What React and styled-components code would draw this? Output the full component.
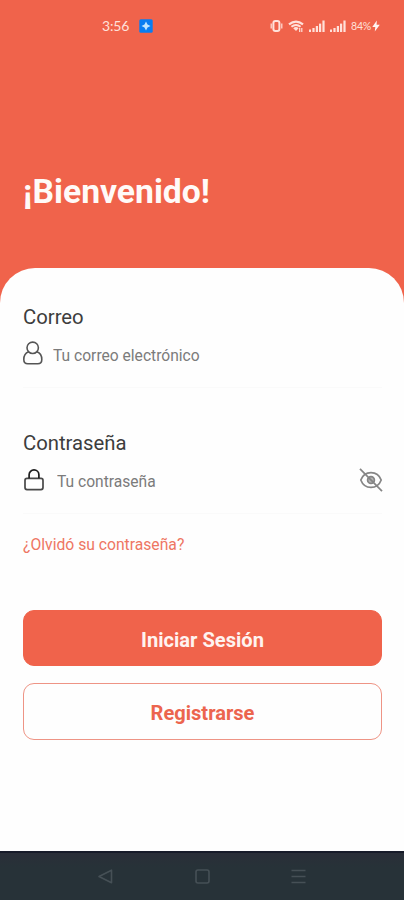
import React, { useState } from 'react';
import styled, { createGlobalStyle } from 'styled-components';

const coral = '#f0634b';

const GlobalStyle = createGlobalStyle`
    * {
        box-sizing:border-box;
    }
    body {
        margin:0;
        background-color:${coral};
        font-family:Roboto, "Liberation Sans", sans-serif;
    }
`;

const Screen = styled.div`
    display:flex;
    flex-direction:column;
    width:100%;
    height:100vh;
    overflow:hidden;
    background-color:${coral};
`;

const StatusBar = styled.div`
    display:flex;
    justify-content:space-between;
    align-items:center;
    height:52px;
    padding:0 24px 0 102px;
    color:#ffe1da;
`;

const StatusGroup = styled.div`
    display:flex;
    align-items:center;
    gap:${(props) => props.$gap}px;
    svg {
        display:block;
    }
`;

const Clock = styled.span`
    font-family:Lato, sans-serif;
    font-size:14px;
    line-height:16px;
    width:27px;
    white-space:nowrap;
    letter-spacing:-0.2px;
`;

const Battery = styled.span`
    font-family:Lato, sans-serif;
    font-size:10.5px;
    line-height:12px;
    width:20px;
    white-space:nowrap;
    letter-spacing:-0.2px;
`;

const Header = styled.header`
    height:216px;
    padding:120px 23px 0;
`;

const Title = styled.h1`
    margin:0;
    color:#fffaf8;
    font-size:33.7px;
    line-height:40px;
    font-weight:700;
`;

const Card = styled.main`
    display:flex;
    flex-direction:column;
    flex:1;
    padding:36px 22px 0 23px;
    border-radius:35px 35px 0 0;
    background-color:#fefefe;
`;

const Field = styled.div`
    height:${(props) => props.$height}px;
`;

const Label = styled.label`
    display:block;
    color:#3d3d3d;
    font-size:20.3px;
    line-height:26px;
`;

const InputRow = styled.div`
    display:flex;
    align-items:center;
    height:58px;
    padding:2px 0 8px;
    border-bottom:1px solid #fafafa;
    svg {
        display:block;
        flex:none;
        margin-bottom:4px;
    }
`;

const Input = styled.input`
    flex:1;
    min-width:0;
    height:30px;
    margin-left:${(props) => props.$gap}px;
    padding:0;
    border:none;
    outline:none;
    background:transparent;
    color:#444;
    font-family:inherit;
    font-size:15.6px;
    &::placeholder {
        color:#7b7b7b;
        opacity:1;
    }
`;

const EyeButton = styled.button`
    margin-right:-1px;
    padding:0;
    border:none;
    background:transparent;
    cursor:pointer;
`;

const Forgot = styled.a`
    color:#ee7663;
    font-size:15.7px;
    line-height:20px;
    text-decoration:none;
`;

const Actions = styled.div`
    display:flex;
    flex-direction:column;
    gap:17px;
    margin-top:55px;
`;

const Button = styled.button`
    height:${(props) => (props.$outline ? 57 : 56)}px;
    padding:3px 0 0;
    border:1px solid ${(props) => (props.$outline ? '#ee9485' : coral)};
    border-radius:11px;
    background-color:${(props) => (props.$outline ? '#fefefe' : coral)};
    color:${(props) => (props.$outline ? '#ec654e' : '#fff3f0')};
    font-family:inherit;
    font-size:20.1px;
    font-weight:700;
    cursor:pointer;
`;

const NavBar = styled.nav`
    display:flex;
    justify-content:space-between;
    align-items:center;
    height:49px;
    padding:0 97px;
    border-top:2px solid #171b29;
    background:#273238 linear-gradient(#2a2e38, #273238) no-repeat 0 0 / 100% 14px;
    svg {
        display:block;
    }
`;

const VibrateIcon = () => (
    <svg width="13" height="12" viewBox="0 0 13 12" fill="none" stroke="currentColor">
        <rect x="3.4" y="1" width="6" height="10" rx="2" strokeWidth="2" />
        <path d="M1.2 3.6v4.8M11.8 3.6v4.8" strokeWidth="1.2" />
    </svg>
);

const WifiIcon = () => (
    <svg width="16" height="13" viewBox="0 0 16 13" fill="none" stroke="currentColor">
        <path d="M1 4.4Q8-1.2 15 4.4" strokeWidth="2.2" />
        <path d="M3.4 6.8Q8 3.2 12.6 6.8" strokeWidth="2" />
        <path d="M5.2 8.2Q8 6 10.6 8.2L8 11z" fill="currentColor" stroke="none" />
        <path d="M11.7 8v4M13.8 8v4" strokeWidth="1.2" />
    </svg>
);

const SignalIcon = () => (
    <svg width="16" height="12" viewBox="0 0 16 12" fill="currentColor">
        <rect x="0" y="9.5" width="2" height="2.5" />
        <rect x="3.4" y="8" width="2.2" height="4" />
        <rect x="6.8" y="6" width="2.2" height="6" />
        <rect x="10" y="3.6" width="2.2" height="8.4" />
        <rect x="13.4" y="0.5" width="2.2" height="11.5" />
    </svg>
);

const BoltIcon = () => (
    <svg width="8" height="12" viewBox="0 0 8 12" fill="#fff4f1">
        <path d="M4.8 0.5L0.3 7h3L2.8 11.6L7.8 4.8H4.6z" />
    </svg>
);

const AppBadge = () => (
    <svg width="14" height="14" viewBox="0 0 14 14">
        <rect x="0.3" y="0.3" width="13.4" height="13.4" rx="1.5" fill="#087df2" />
        <path d="M7 2.5L8.5 5.5L11.5 7L8.5 8.5L7 11.5L5.5 8.5L2.5 7L5.5 5.5z" fill="#bfe6ff" />
    </svg>
);

const UserIcon = () => (
    <svg width="20" height="25" viewBox="0 0 20 25" fill="none" stroke="#555" strokeWidth="1.6">
        <circle cx="9.7" cy="6.8" r="5.7" />
        <path d="M5.6 10.7C2.2 12 .8 14.8.8 18.4c0 2.9 1.4 4.3 4 4.3h10c2.6 0 4-1.4 4-4.3 0-3.600-1.400-6.400-4.900-7.700" />
    </svg>
);

const LockIcon = () => (
    <svg width="22" height="24" viewBox="0 0 22 24" fill="none">
        <rect x="2" y="10.4" width="18" height="11.2" rx="2" stroke="#484848" strokeWidth="1.7" />
        <path d="M6.1 10.2V6.8a4.9 4.9 0 0 1 9.8 0v3.4" stroke="#1d1d1d" strokeWidth="1.7" />
    </svg>
);

const EyeIcon = ({ off }) => (
    <svg width="24" height="24" viewBox="0 0 24 24" fill="none" stroke="#858585" strokeWidth="1.7">
        <path d="M1.8 12C3.6 7.2 7.6 4.6 12 4.6S20.4 7.2 22.2 12C20.4 16.8 16.4 19.4 12 19.4S3.6 16.8 1.8 12z" />
        <circle cx="12" cy="12" r="3.4" fill="#b4b4b4" />
        {off && <path d="M1 0.8L23 23.2" />}
    </svg>
);

const NavIcon = ({ children }) => (
    <svg width="17" height="17" viewBox="0 0 17 17" fill="none" stroke="#465056" strokeWidth="1.6" strokeLinejoin="round">
        {children}
    </svg>
);

export const App = () => {
    const [visible, setVisible] = useState(false);

    return (
        <Screen>
            <GlobalStyle />
            <StatusBar>
                <StatusGroup $gap={10}>
                    <Clock>3:56</Clock>
                    <AppBadge />
                </StatusGroup>
                <StatusGroup $gap={5}>
                    <VibrateIcon />
                    <WifiIcon />
                    <SignalIcon />
                    <SignalIcon />
                    <StatusGroup $gap={1}>
                        <Battery>84%</Battery>
                        <BoltIcon />
                    </StatusGroup>
                </StatusGroup>
            </StatusBar>
            <Header>
                <Title>¡Bienvenido!</Title>
            </Header>
            <Card>
                <Field $height={126}>
                    <Label htmlFor="email">Correo</Label>
                    <InputRow>
                        <UserIcon />
                        <Input id="email" type="text" placeholder="Tu correo electrónico" $gap={10} />
                    </InputRow>
                </Field>
                <Field $height={105}>
                    <Label htmlFor="password">Contraseña</Label>
                    <InputRow>
                        <LockIcon />
                        <Input id="password" type={visible ? 'text' : 'password'} placeholder="Tu contraseña" $gap={12} />
                        <EyeButton type="button" aria-label="Mostrar contraseña" onClick={() => setVisible(!visible)}>
                            <EyeIcon off={!visible} />
                        </EyeButton>
                    </InputRow>
                </Field>
                <Forgot href="#">¿Olvidó su contraseña?</Forgot>
                <Actions>
                    <Button type="button">Iniciar Sesión</Button>
                    <Button type="button" $outline>Registrarse</Button>
                </Actions>
            </Card>
            <NavBar>
                <NavIcon>
                    <path d="M14.5 2.2v12.6L2 8.5z" />
                </NavIcon>
                <NavIcon>
                    <rect x="2" y="2" width="13" height="13" rx="2" />
                </NavIcon>
                <NavIcon>
                    <path d="M1.5 2.5h14M1.5 8.5h14M1.5 14.5h14" />
                </NavIcon>
            </NavBar>
        </Screen>
    );
};

export default App;
